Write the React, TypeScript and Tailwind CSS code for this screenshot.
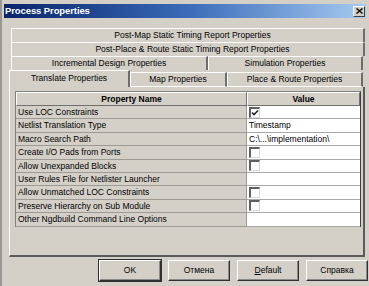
import React from "react"

const rows: { name: string; value?: string; check?: boolean; checked?: boolean }[] = [
  { name: "Use LOC Constraints", check: true, checked: true },
  { name: "Netlist Translation Type", value: "Timestamp" },
  { name: "Macro Search Path", value: "C:\\...\\implementation\\" },
  { name: "Create I/O Pads from Ports", check: true },
  { name: "Allow Unexpanded Blocks", check: true },
  { name: "User Rules File for Netlister Launcher" },
  { name: "Allow Unmatched LOC Constraints", check: true },
  { name: "Preserve Hierarchy on Sub Module", check: true },
  { name: "Other Ngdbuild Command Line Options" },
]

function Tab({ label, className }: { label: string; className: string }) {
  return (
    <div
      className={`flex items-center justify-center border-t border-l border-t-white border-l-white border-r-2 border-r-[#6e6e6e] ${className}`}
    >
      {label}
    </div>
  )
}

function CheckBox({ checked }: { checked?: boolean }) {
  return (
    <div className="w-[11px] h-[11px] bg-white border-t-2 border-l-2 border-t-[#606060] border-l-[#606060] border-r border-b border-r-[#d8d8d8] border-b-[#d8d8d8] flex items-center justify-center">
      {checked && (
        <svg width="8" height="8" viewBox="0 0 8 8">
          <path d="M1 3.5 L3 5.5 L7 1.5" stroke="#222" strokeWidth="1.6" fill="none" />
        </svg>
      )}
    </div>
  )
}

function DlgButton({ children, isDefault }: { children: React.ReactNode; isDefault?: boolean }) {
  return (
    <div
      className={`w-[62px] h-[21px] flex items-center justify-center bg-[#d4d0c8] border border-t-white border-l-white border-r-[#303030] border-b-[#303030] shadow-[inset_-1px_-1px_0_#8a8a8a] ${
        isDefault ? "outline outline-1 outline-[#303030]" : ""
      }`}
    >
      {children}
    </div>
  )
}

export default function App() {
  return (
    <div
      className="w-[369px] h-[286px] bg-[#d4d0c8] text-black text-[8.5px] leading-none flex flex-col pt-[4px] pl-[2px] pr-[3px] border-l-2 border-l-[#9a9894] overflow-hidden"
      style={{ fontFamily: '"Liberation Sans", Arial, sans-serif' }}
    >
      {/* Title bar */}
      <div className="h-[14px] bg-gradient-to-r from-[#0a246a] via-[#3a6ab8] to-[#a6caf0] flex items-center justify-between pl-[1px] pr-[1px]">
        <span className="text-white font-bold text-[9.5px] tracking-[-0.1px]">Process Properties</span>
        <div className="w-[12px] h-[11px] bg-[#d4d0c8] border border-t-white border-l-white border-r-[#404040] border-b-[#404040] flex items-center justify-center">
          <svg width="7" height="6" viewBox="0 0 7 6">
            <path d="M0.5 0.5 L6.5 5.5 M6.5 0.5 L0.5 5.5" stroke="#111" strokeWidth="1.5" />
          </svg>
        </div>
      </div>

      {/* Tab rows */}
      <div className="mt-[10px] flex flex-col pl-[5px] pr-[1px]">
        <div className="flex h-[14px] pl-[2px]">
          <Tab label="Post-Map Static Timing Report Properties" className="flex-1 pl-[10px]" />
        </div>
        <div className="flex h-[14px] pl-[2px]">
          <Tab label="Post-Place & Route Static Timing Report Properties" className="flex-1 pl-[10px]" />
        </div>
        <div className="flex h-[14px] pl-[2px] pr-[2px]">
          <Tab label="Incremental Design Properties" className="w-[197px]" />
          <Tab label="Simulation Properties" className="flex-1" />
        </div>
        <div className="flex h-[17px] pr-[2px]">
          <Tab label="Translate Properties" className="w-[121px] bg-[#d4d0c8] pb-[2px]" />
          <Tab label="Map Properties" className="w-[97px] mt-[2px] border-b border-b-white" />
          <Tab label="Place & Route Properties" className="flex-1 mt-[2px] border-b border-b-white" />
        </div>
      </div>

      {/* Panel */}
      <div className="h-[170px] ml-[5px] mr-[1px] border-l border-l-white border-r-2 border-r-[#5a5a5a] border-b-2 border-b-[#5a5a5a] pt-[4px] pl-[5px] pr-[5px]">
        <div className="w-[346px] border-t border-l border-t-[#808080] border-l-[#808080] border-r border-r-[#404040]">
          <div className="flex h-[14px]">
            <div className="w-[231px] flex items-center justify-center font-bold border-t border-l border-t-white border-l-white border-r border-b border-r-[#707070] border-b-[#707070]">
              Property Name
            </div>
            <div className="flex-1 flex items-center justify-center font-bold border-t border-l border-t-white border-l-white border-r border-b border-r-[#707070] border-b-[#707070]">
              Value
            </div>
          </div>
          {rows.map((r) => (
            <div key={r.name} className="flex h-[13.4px]">
              <div className="w-[231px] flex items-center pl-[2px] border-b border-r border-b-[#9c9a94] border-r-[#9c9a94]">
                {r.name}
              </div>
              <div className="flex-1 flex items-center pl-[2px] bg-white border-b border-b-[#a8a8a8]">
                {r.check ? <CheckBox checked={r.checked} /> : r.value}
              </div>
            </div>
          ))}
        </div>
      </div>

      {/* Buttons */}
      <div className="mt-[3px] -mr-[2px] flex justify-end gap-[7px]">
        <DlgButton isDefault>OK</DlgButton>
        <DlgButton>Отмена</DlgButton>
        <DlgButton>
          <span>
            <span className="underline">D</span>efault
          </span>
        </DlgButton>
        <DlgButton>Справка</DlgButton>
      </div>
    </div>
  )
}
